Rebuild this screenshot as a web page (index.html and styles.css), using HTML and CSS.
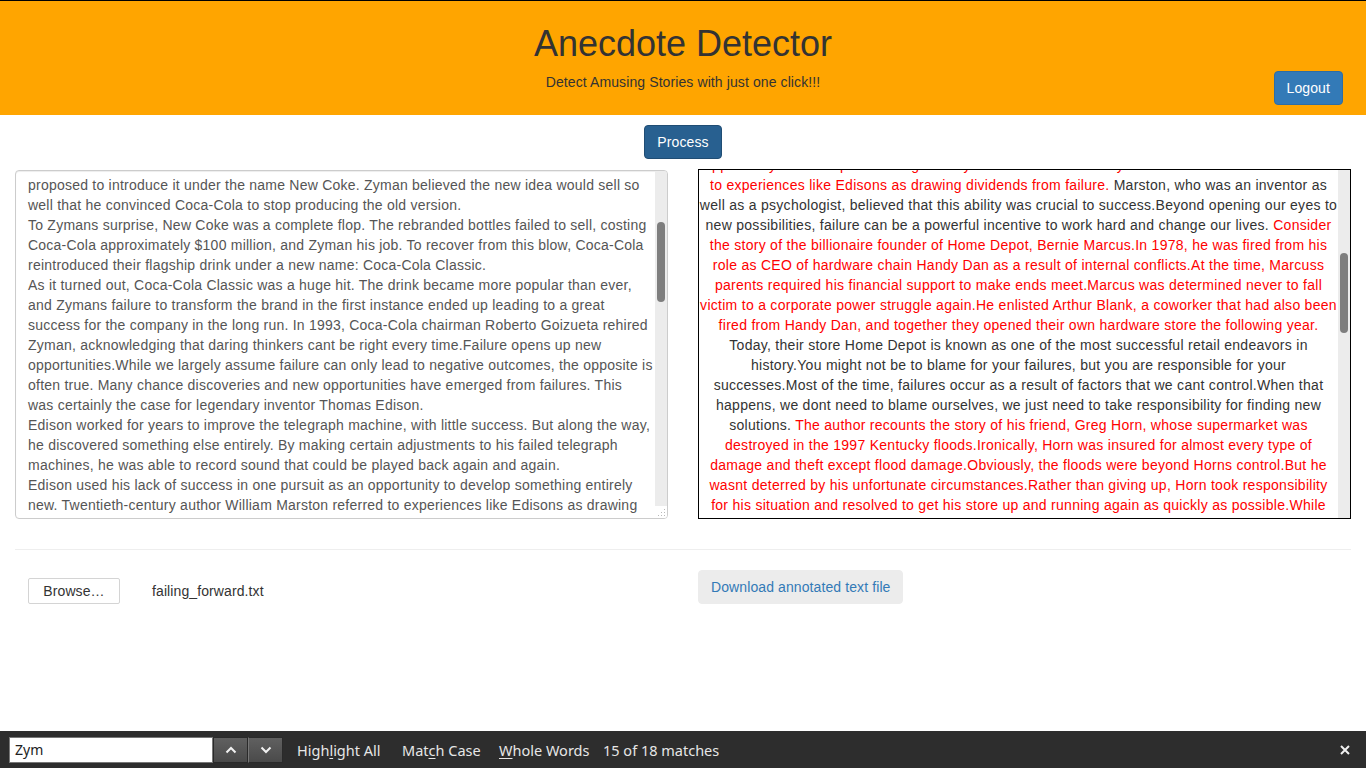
FILE: index.html
```html
<!DOCTYPE html>
<html lang="en">
<head>
<meta charset="utf-8">
<title>Anecdote Detector</title>
<link rel="stylesheet" href="styles.css">
</head>
<body>
<div class="page">
  <header class="header">
    <h1 class="title">Anecdote Detector</h1>
    <div class="header-row">
      <span></span>
      <p class="subtitle">Detect Amusing Stories with just one click!!!</p>
      <button class="btn btn-primary logout">Logout</button>
    </div>
  </header>

  <div class="actions">
    <button class="btn btn-process">Process</button>
  </div>

  <div class="panels">
    <div class="textbox">
      <div class="textbox-text">proposed to introduce it under the name New Coke. Zyman believed the new idea would sell so<br>well that he convinced Coca-Cola to stop producing the old version.<br>To Zymans surprise, New Coke was a complete flop. The rebranded bottles failed to sell, costing<br>Coca-Cola approximately $100 million, and Zyman his job. To recover from this blow, Coca-Cola<br>reintroduced their flagship drink under a new name: Coca-Cola Classic.<br>As it turned out, Coca-Cola Classic was a huge hit. The drink became more popular than ever,<br>and Zymans failure to transform the brand in the first instance ended up leading to a great<br>success for the company in the long run. In 1993, Coca-Cola chairman Roberto Goizueta rehired<br>Zyman, acknowledging that daring thinkers cant be right every time.Failure opens up new<br>opportunities.While we largely assume failure can only lead to negative outcomes, the opposite is<br>often true. Many chance discoveries and new opportunities have emerged from failures. This<br>was certainly the case for legendary inventor Thomas Edison.<br>Edison worked for years to improve the telegraph machine, with little success. But along the way,<br>he discovered something else entirely. By making certain adjustments to his failed telegraph<br>machines, he was able to record sound that could be played back again and again.<br>Edison used his lack of success in one pursuit as an opportunity to develop something entirely<br>new. Twentieth-century author William Marston referred to experiences like Edisons as drawing<br>dividends from failure.</div>
      <div class="scroll scroll-left">
        <div class="track"><div class="thumb thumb-left"></div></div>
        <div class="grip">
          <svg width="12" height="12" viewBox="0 0 12 12"><g fill="#b9b9b9"><rect x="9" y="3" width="1" height="1"/><rect x="6" y="6" width="1" height="1"/><rect x="9" y="6" width="1" height="1"/><rect x="3" y="9" width="1" height="1"/><rect x="6" y="9" width="1" height="1"/><rect x="9" y="9" width="1" height="1"/></g></svg>
        </div>
      </div>
    </div>

    <div class="output">
      <div class="output-text">
        <div class="output-inner">
          <span class="hl">opportunity to develop something entirely new. Twentieth-century author William Marston referred</span><br>
          <span class="hl">to experiences like Edisons as drawing dividends from failure.</span> Marston, who was an inventor as<br>
          well as a psychologist, believed that this ability was crucial to success.Beyond opening our eyes to<br>
          new possibilities, failure can be a powerful incentive to work hard and change our lives. <span class="hl">Consider</span><br>
          <span class="hl">the story of the billionaire founder of Home Depot, Bernie Marcus.In 1978, he was fired from his<br>
          role as CEO of hardware chain Handy Dan as a result of internal conflicts.At the time, Marcuss<br>
          parents required his financial support to make ends meet.Marcus was determined never to fall<br>
          victim to a corporate power struggle again.He enlisted Arthur Blank, a coworker that had also been<br>
          fired from Handy Dan, and together they opened their own hardware store the following year.</span><br>
          Today, their store Home Depot is known as one of the most successful retail endeavors in<br>
          history.You might not be to blame for your failures, but you are responsible for your<br>
          successes.Most of the time, failures occur as a result of factors that we cant control.When that<br>
          happens, we dont need to blame ourselves, we just need to take responsibility for finding new<br>
          solutions. <span class="hl">The author recounts the story of his friend, Greg Horn, whose supermarket was<br>
          destroyed in the 1997 Kentucky floods.Ironically, Horn was insured for almost every type of<br>
          damage and theft except flood damage.Obviously, the floods were beyond Horns control.But he<br>
          wasnt deterred by his unfortunate circumstances.Rather than giving up, Horn took responsibility<br>
          for his situation and resolved to get his store up and running again as quickly as possible.While</span>
        </div>
      </div>
      <div class="scroll scroll-right">
        <div class="track"><div class="thumb thumb-right"></div></div>
      </div>
    </div>
  </div>

  <hr class="divider">

  <div class="panels lower">
    <div class="upload">
      <button class="browse">Browse…</button>
      <span class="filename">failing_forward.txt</span>
    </div>
    <div class="download-cell">
      <button class="btn btn-download">Download annotated text file</button>
    </div>
  </div>
</div>

<div class="findbar">
  <div class="find-field">
    <div class="find-input">Zym</div>
    <button class="find-nav">
      <svg width="12" height="8" viewBox="0 0 12 8"><polyline points="1.5,6.5 6,2 10.5,6.5" fill="none" stroke="#f2f2f2" stroke-width="2"/></svg>
    </button>
    <button class="find-nav">
      <svg width="12" height="8" viewBox="0 0 12 8"><polyline points="1.5,1.5 6,6 10.5,1.5" fill="none" stroke="#f2f2f2" stroke-width="2"/></svg>
    </button>
  </div>
  <span class="find-opt opt-highlight">High<u>l</u>ight All</span>
  <span class="find-opt opt-case">Mat<u>c</u>h Case</span>
  <span class="find-opt opt-words"><u>W</u>hole Words</span>
  <span class="find-status">15 of 18 matches</span>
  <button class="find-close">
    <svg width="12" height="12" viewBox="0 0 12 12"><path d="M2 2 L10 10 M10 2 L2 10" stroke="#f0f0f0" stroke-width="2"/></svg>
  </button>
</div>
</body>
</html>
```

FILE: styles.css
```css
* { box-sizing: border-box; }

html, body {
  margin: 0;
  padding: 0;
}

body {
  font-family: "Liberation Sans", Arial, Helvetica, sans-serif;
  font-size: 14px;
  line-height: 20px;
  letter-spacing: 0.1px;
  color: #333;
  background: #fff;
  height: 768px;
  display: flex;
  flex-direction: column;
  overflow: hidden;
}

.page {
  flex: 1;
}

button {
  font-family: inherit;
  letter-spacing: inherit;
}

/* Header */
.header {
  background: #ffa500;
  border-top: 1px solid #000;
  padding: 23px 23px 10px;
}

.title {
  margin: 0;
  text-align: center;
  font-size: 36px;
  line-height: 40px;
  font-weight: 400;
  letter-spacing: 0;
  color: #333;
}

.header-row {
  margin-top: 7px;
  display: grid;
  grid-template-columns: 1fr auto 1fr;
  align-items: start;
}

.subtitle {
  margin: 1px 0 0;
  font-size: 14px;
  line-height: 20px;
  color: #333;
}

.btn {
  display: inline-block;
  font-size: 14px;
  line-height: 20px;
  padding: 6px 12px;
  border: 1px solid transparent;
  border-radius: 4px;
  cursor: pointer;
}

.btn-primary {
  background: #337ab7;
  border-color: #2e6da4;
  color: #fff;
}

.logout {
  justify-self: end;
}

/* Process */
.actions {
  display: flex;
  justify-content: center;
  margin-top: 10px;
}

.btn-process {
  background: #286090;
  border-color: #204d74;
  color: #fff;
}

/* Panels */
.panels {
  display: grid;
  grid-template-columns: 1fr 1fr;
  column-gap: 30px;
  padding: 0 15px;
  margin-top: 10px;
  align-items: start;
}

.textbox {
  margin-top: 1px;
  height: 349px;
  border: 1px solid #ccc;
  border-radius: 4px;
  box-shadow: inset 0 1px 1px rgba(0, 0, 0, 0.075);
  display: flex;
  overflow: hidden;
  background: #fff;
}

.textbox-text {
  flex: 1;
  padding: 4px 0 0 12px;
  color: #555;
  letter-spacing: 0.23px;
  white-space: nowrap;
  overflow: hidden;
}

.scroll {
  width: 12px;
  flex: none;
  display: flex;
  flex-direction: column;
}

.track {
  flex: 1;
  background: #ececec;
  padding: 0 2px 0 2px;
}

.thumb {
  height: 80px;
  background: #7e7e7e;
  border-radius: 4px;
}

.thumb-left {
  margin-top: 51px;
}

.grip {
  height: 12px;
  background: #fff;
  line-height: 0;
}

.output {
  height: 350px;
  border: 1px solid #000;
  display: flex;
  overflow: hidden;
  background: #fff;
}

.output-text {
  flex: 1;
  overflow: hidden;
  text-align: center;
  color: #333;
  letter-spacing: 0.28px;
  white-space: nowrap;
}

.output-inner {
  margin-top: -15px;
}

.hl {
  color: #ff0000;
}

.thumb-right {
  margin-top: 83px;
}

/* Lower */
.divider {
  margin: 30px 15px 0;
  border: 0;
  border-top: 1px solid #eee;
  height: 0;
}

.lower {
  margin-top: 20px;
}

.upload {
  display: flex;
  align-items: center;
  padding: 8px 0 0 13px;
}

.browse {
  width: 92px;
  height: 26px;
  background: #fff;
  border: 1px solid #d4d4d4;
  border-radius: 2px;
  color: #333;
  font-size: 14px;
  padding: 0;
}

.filename {
  margin-left: 32px;
  color: #333;
}

.btn-download {
  background: #ececec;
  border-color: #ececec;
  color: #337ab7;
}

/* Find bar */
.findbar {
  flex: none;
  height: 37px;
  background: #2d2d2d;
  display: flex;
  align-items: center;
  padding: 0 9px;
  font-family: "Noto Sans", "DejaVu Sans", sans-serif;
  font-size: 14.5px;
  letter-spacing: 0;
  color: #e6e6e6;
}

.find-field {
  display: flex;
  height: 26px;
}

.find-input {
  width: 204px;
  background: #fff;
  border: 1px solid #777;
  color: #222;
  padding: 0 5px;
  line-height: 24px;
  font-size: 14px;
}

.find-nav {
  width: 35px;
  height: 26px;
  padding: 0;
  border: 1px solid #2a2a2a;
  background: linear-gradient(#606060, #4a4a4a);
  display: flex;
  align-items: center;
  justify-content: center;
}

.find-nav + .find-nav {
  border-left: 1px solid #777;
}

.find-opt {
  display: inline-block;
  white-space: nowrap;
}

.find-opt u {
  text-decoration-thickness: 1px;
  text-underline-offset: 2px;
}

.opt-highlight { margin-left: 14px; width: 86px; }
.opt-case { margin-left: 19px; width: 78px; }
.opt-words { margin-left: 19px; width: 92px; }
.find-status { margin-left: 12px; white-space: nowrap; }

.find-close {
  margin-left: auto;
  margin-right: 6px;
  background: transparent;
  border: 0;
  padding: 0;
  width: 12px;
  height: 12px;
  line-height: 0;
}
```
